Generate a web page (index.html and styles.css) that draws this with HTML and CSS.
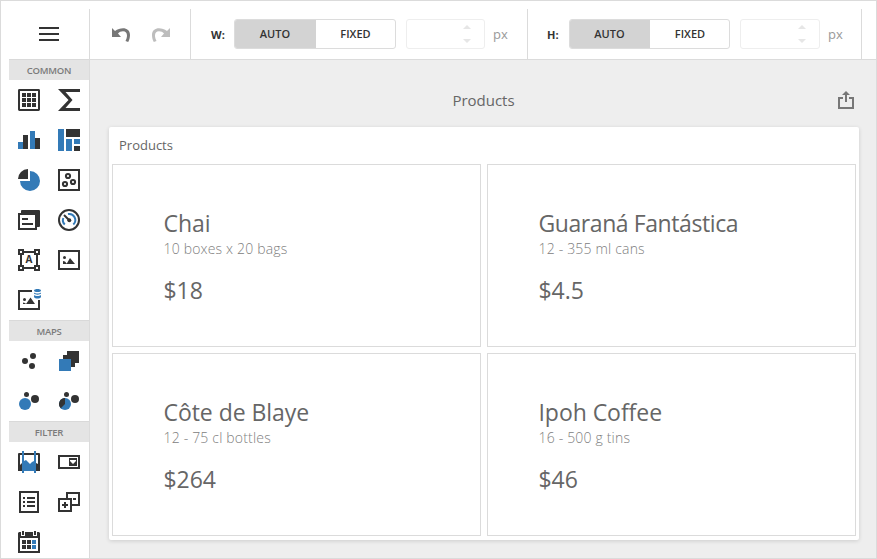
FILE: index.html
```html
<!DOCTYPE html>
<html lang="en">
<head>
<meta charset="utf-8">
<title>Products</title>
<link rel="stylesheet" href="styles.css">
</head>
<body>
<div class="app">
  <aside class="sidebar">
    <div class="menu"><svg width="20" height="14" viewBox="0 0 20 14"><path class="d" d="M0 0h20v2H0zM0 6h20v2H0zM0 12h20v2H0z"/></svg></div>
    <h2>COMMON</h2>
    <div class="tools">
      <svg viewBox="0 0 24 24"><rect class="s" x="2" y="2" width="20" height="20" rx=".4"/><path class="d" d="M5 5h4v4H5zM10 5h4v4h-4zM15 5h4v4h-4zM5 10h4v4H5zM10 10h4v4h-4zM15 10h4v4h-4zM5 15h4v4H5zM10 15h4v4h-4zM15 15h4v4h-4z"/></svg>
      <svg viewBox="0 0 24 24"><path class="d" d="M1 1h22v3H8.500l7 8-7 8H23v3H1l10.500-11z"/></svg>
      <svg viewBox="0 0 24 24"><path class="b" d="M1 14h5v7H1zM13 3h5v18h-5z"/><path class="d" d="M6 7h5v14H6zM18 10h5v11h-5z"/></svg>
      <svg viewBox="0 0 24 24"><path class="b" d="M1 1h6v22H1zM9 11h6v12H9zM17 11h6v5h-6z"/><path class="d" d="M9 1h14v8H9zM17 18h6v5h-6z"/></svg>
      <svg viewBox="0 0 24 24"><path class="d" d="M11 1v10H1A10 10 0 0 1 11 1z"/><path class="b" d="M13 3A10 10 0 1 1 3 13h10z"/></svg>
      <svg viewBox="0 0 24 24"><rect class="s" x="2" y="2" width="20" height="20"/><circle class="s" cx="11" cy="8" r="2.100"/><circle class="s" cx="8" cy="16" r="2.100"/><circle class="s" cx="16" cy="14" r="2.100"/></svg>
      <svg viewBox="0 0 24 24"><path class="d" d="M5 2h17a1 1 0 0 1 1 1v15a1 1 0 0 1-1 1h-2v3H1V5h3V3a1 1 0 0 1 1-1zM3 7v13h15V7z" fill-rule="evenodd"/><path class="d" d="M5 10h6v2H5zM5 15h11v2H5z"/></svg>
      <svg viewBox="0 0 24 24"><circle class="s" cx="12" cy="12" r="10"/><path class="sb" d="M7.800 16.500A6 6 0 0 1 6.300 10M11 6.100A6 6 0 0 1 16.300 16.400"/><path class="s" d="M7 7l5 5"/><circle class="d" cx="12.300" cy="12.300" r="2"/></svg>
      <svg viewBox="0 0 24 24"><path class="s" d="M7 4h10M7 20h10M4 7v10M20 7v10M2 2h4v4H2zM18 2h4v4h-4zM2 18h4v4H2zM18 18h4v4h-4z"/><text class="d letter" x="12" y="15.300">A</text></svg>
      <svg viewBox="0 0 24 24"><path class="s" d="M2 3h20v18H2z"/><circle class="d" cx="7.500" cy="9.500" r="1.500"/><path class="d" d="M6 16v-3l2 .5 2 2.500zM9.500 16l3.500-6 5 6z"/></svg>
      <svg viewBox="0 0 24 24"><path class="s" d="M15 3H2v18h20v-9"/><circle class="d" cx="7.500" cy="11.500" r="1.500"/><path class="d" d="M6 16v-1.500l2 .5 1 1zM9 16l4.500-6.500L18 16z"/><path class="b" d="M17 2.500c0-2 7-2 7 0s-7 2-7 0zM17 4.500c1.500 1.300 5.500 1.300 7 0v1c-1 1.500-6 1.500-7 0zM17 7c1.500 1.300 5.500 1.300 7 0v2c-1 2-6 2-7 0z"/></svg>
    </div>
    <h2>MAPS</h2>
    <div class="tools">
      <svg viewBox="0 0 24 24"><circle class="d" cx="16" cy="7" r="3"/><circle class="d" cx="8" cy="12" r="3"/><circle class="d" cx="15" cy="17" r="3"/></svg>
      <svg viewBox="0 0 24 24"><path class="d" d="M10 2h12v12h-4v4H6V6h4z"/><path class="b" d="M2 10h12v12H2z"/></svg>
      <svg viewBox="0 0 24 24"><circle class="d" cx="9.500" cy="5.500" r="2.500"/><circle class="d" cx="18" cy="10" r="4"/><circle class="b" cx="8" cy="15" r="6"/></svg>
      <svg viewBox="0 0 24 24"><circle class="d" cx="9.500" cy="5.500" r="2.500"/><circle class="d" cx="18" cy="10" r="4"/><circle class="b" cx="8" cy="15" r="6"/><path class="d" d="M8 15V9a6 6 0 0 0-4.240 10.240z"/></svg>
    </div>
    <h2>FILTER</h2>
    <div class="tools">
      <svg viewBox="0 0 24 24"><path class="d" fill-rule="evenodd" d="M2 3h20a1 1 0 0 1 1 1v17H1V4a1 1 0 0 1 1-1zM3 5v10l2-2h14l2 1V5z"/><path fill="#fff" d="M7 5h10v15H7z"/><path class="b" d="M5 1h2v10l2-1 4 4 2-2 2-1V1h2v22h-2v-2H7v2H5z"/></svg>
      <svg viewBox="0 0 24 24"><path class="s" d="M2 6h20v12H2z"/><path class="d" fill-rule="evenodd" d="M12 8h8v8h-8zM13 10v1l3 3 3-3v-1z"/></svg>
      <svg viewBox="0 0 24 24"><path class="s" d="M3 2h18v20H3z"/><path class="d" d="M6 7h2v2H6zM10 7h8v2h-8zM6 11h2v2H6zM10 11h8v2h-8zM6 15h2v2H6zM10 15h8v2h-8z"/></svg>
      <svg viewBox="0 0 24 24"><path class="s" d="M10 8V3h12v12h-7M2 9h12v12H2zM8 12v6M5 15h6M16 9h3"/></svg>
      <svg viewBox="0 0 24 24"><path class="d" fill-rule="evenodd" d="M1 3l1-1h2v4h4V2h8v4h4V2h2l1 1v20H1zM3 8v13h18V8z"/><path class="d" d="M5 1h2v4H5zM17 1h2v4h-2zM5 10h4v4H5zM10 10h4v4h-4zM5 15h4v4H5zM10 15h4v4h-4z"/><path class="b" d="M15 10h4v4h-4zM15 15h4v4h-4z"/></svg>
    </div>
  </aside>
  <div class="workspace">
    <header class="toolbar">
      <div class="history">
        <svg width="18" height="14" viewBox="0 0 18 14"><path fill="#777" d="M0 0l3 3C9-1.500 18-1 18 7c0 3-.8 5-1.800 7l-2.700-1C16 8 15.500 3.200 11 3.200c-2 0-3.700.8-5 2.300L9 9H0z"/></svg>
        <svg width="18" height="14" viewBox="0 0 18 14"><path fill="#bdbdbd" d="M18 0l-3 3C9-1.500 0-1 0 7c0 3 .8 5 1.800 7l2.700-1C2 8 2.500 3.200 7 3.200c2 0 3.700.8 5 2.300L9 9h9z"/></svg>
      </div>
      <div class="size width">
        <b>W:</b>
        <div class="segment"><span class="on">AUTO</span><span>FIXED</span></div>
        <div class="spin"><svg width="8" height="18" viewBox="0 0 8 18"><path d="M4 0l4 4H0zM0 14h8l-4 4z"/></svg></div>
        <span class="unit">px</span>
      </div>
      <div class="size height">
        <b>H:</b>
        <div class="segment"><span class="on">AUTO</span><span>FIXED</span></div>
        <div class="spin"><svg width="8" height="18" viewBox="0 0 8 18"><path d="M4 0l4 4H0zM0 14h8l-4 4z"/></svg></div>
        <span class="unit">px</span>
      </div>
    </header>
    <main>
      <div class="heading"><h1>Products</h1><svg width="16" height="18" viewBox="0 0 16 18"><path fill="none" stroke="#777" stroke-width="2" d="M5 7H1v10h14V7h-4M8 11V3"/><path fill="#777" d="M8 0l4 4H4z"/></svg></div>
      <section class="panel">
        <h3>Products</h3>
        <div class="cards">
          <article><p class="name">Chai</p><p class="pack">10 boxes x 20 bags</p><p class="price">$18</p></article>
          <article><p class="name tight">Guaraná Fantástica</p><p class="pack">12 - 355 ml cans</p><p class="price">$4.5</p></article>
          <article><p class="name">Côte de Blaye</p><p class="pack">12 - 75 cl bottles</p><p class="price">$264</p></article>
          <article><p class="name">Ipoh Coffee</p><p class="pack">16 - 500 g tins</p><p class="price">$46</p></article>
        </div>
      </section>
    </main>
  </div>
</div>
</body>
</html>
```
FILE: styles.css
```css
* { box-sizing: border-box; }
body { margin: 0; font-family: "Open Sans", "Noto Sans", sans-serif; color: #666; }
h1, h2, h3, p { margin: 0; font-weight: 400; }
svg { display: block; }
.app { display: flex; width: 877px; height: 559px; border: 1px solid #dbdbdb; background: #fff; overflow: hidden; }
.sidebar { width: 80px; margin-left: 8px; flex: none; }
.menu { height: 58px; padding-top: 8px; display: flex; align-items: center; justify-content: center; }
.sidebar h2 { height: 21px; border-top: 1px solid #d9d9d9; background: #e4e4e4; font-size: 9.5px; letter-spacing: -.25px; font-weight: 600; line-height: 21px; text-align: center; color: #7b7b7b; }
.tools { display: grid; grid-template-columns: 40px 40px; grid-auto-rows: 40px; place-items: center; }
.tools svg { width: 24px; height: 24px; }
.d { fill: #333; }
.b { fill: #337ab7; }
.s { fill: none; stroke: #333; stroke-width: 2; }
.sb { fill: none; stroke: #337ab7; stroke-width: 2; }
.letter { font: 700 10px "Open Sans", sans-serif; text-anchor: middle; }
.workspace { flex: 1; display: flex; flex-direction: column; }
.toolbar { height: 59px; padding-top: 8px; display: flex; border-bottom: 1px solid #dbdbdb; }
.history { width: 102px; border: solid #dbdbdb; border-width: 0 1px; padding: 2px 0 0 22px; display: flex; align-items: center; gap: 22px; }
.size { display: flex; align-items: center; border-right: 1px solid #dbdbdb; }
.width { width: 337px; padding-left: 20px; }
.height { width: 334px; padding-left: 19px; }
.size b { font-size: 11px; font-weight: 700; color: #333; width: 23px; }
.height b { width: 22px; }
.segment { width: 162px; height: 30px; border: 1px solid #dcdcdc; border-radius: 3px; display: flex; overflow: hidden; }
.height .segment { width: 161px; }
.segment span { flex: 1; font-size: 11px; font-weight: 600; color: #333; line-height: 28px; text-align: center; }
.segment .on { flex: none; width: 81px; padding-right: 1px; background: #d3d3d3; }
.height .segment .on { width: 80px; }
.height .segment span:last-child { padding-left: 1px; }
.spin { width: 79px; height: 30px; margin-left: 10px; padding-right: 13px; border: 1px solid #eee; border-radius: 3px; display: flex; align-items: center; justify-content: flex-end; }
.height .spin { width: 80px; }
.spin path { fill: #e6e6e6; }
.unit { margin-left: 8px; font-size: 13px; line-height: 18px; color: #999; }
main { flex: 1; background: #eee; border-left: 1px solid #dbdbdb; padding: 0 17px 17px 19px; }
.heading { height: 67px; padding: 13px 5px 0 0; display: flex; align-items: center; }
.heading h1 { flex: 1; padding-left: 20px; text-align: center; font-size: 15px; line-height: 20px; }
.panel { height: 413px; background: #fff; border-radius: 2px; box-shadow: 0 1px 4px rgba(0,0,0,.14); padding: 0 3px 4px; }
.panel h3 { height: 37px; padding-left: 7px; font-size: 13px; line-height: 36px; }
.cards { display: grid; grid-template-columns: 369px 369px; grid-auto-rows: 183px; gap: 6px; }
article { border: 1px solid #dbdbdb; padding: 43px 0 0 50.5px; white-space: nowrap; }
.name, .price { font-size: 23px; line-height: 30px; letter-spacing: -.05px; }
.tight { letter-spacing: -.42px; }
.pack { margin-top: 1px; font-size: 14px; line-height: 20px; letter-spacing: .18px; color: #808080; font-weight: 300; }
.price { margin-top: 16px; }
```
